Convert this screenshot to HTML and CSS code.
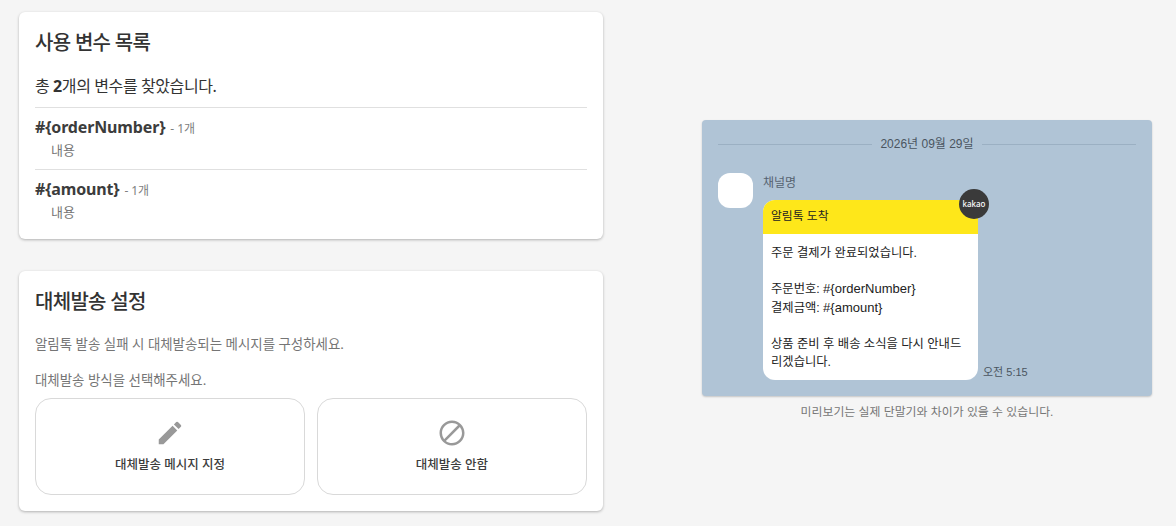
FILE: index.html
```html
<!DOCTYPE html>
<html lang="ko">
<head>
<meta charset="utf-8">
<title>알림톡 미리보기</title>
<link rel="stylesheet" href="styles.css">
</head>
<body>
<main class="page">
  <div class="left">
    <section class="card vars">
      <h2 class="title">사용 변수 목록</h2>
      <p class="count">총 <b>2</b>개의 변수를 찾았습니다.</p>
      <div class="var">
        <div class="var-head"><strong class="var-name">#{orderNumber}</strong><span class="var-count"> - 1개</span></div>
        <div class="var-use">내용</div>
      </div>
      <div class="var">
        <div class="var-head"><strong class="var-name">#{amount}</strong><span class="var-count"> - 1개</span></div>
        <div class="var-use">내용</div>
      </div>
    </section>
    <section class="card fallback">
      <h2 class="title">대체발송 설정</h2>
      <p class="desc first">알림톡 발송 실패 시 대체발송되는 메시지를 구성하세요.</p>
      <p class="desc second">대체발송 방식을 선택해주세요.</p>
      <div class="options">
        <button class="option">
          <svg class="icon" viewBox="0 0 24 24" width="30" height="30"><path d="M3 17.25V21h3.75L17.81 9.94l-3.75-3.75L3 17.25zM20.71 7.04a1 1 0 0 0 0-1.41l-2.34-2.34a1 1 0 0 0-1.41 0l-1.83 1.83 3.75 3.75 1.83-1.83z"/></svg>
          <span>대체발송 메시지 지정</span>
        </button>
        <button class="option">
          <svg class="icon" viewBox="0 0 24 24" width="30" height="30"><path d="M12 2C6.48 2 2 6.48 2 12s4.48 10 10 10 10-4.48 10-10S17.52 2 12 2zM4 12c0-4.42 3.58-8 8-8 1.85 0 3.55.63 4.9 1.69L5.69 16.9A7.902 7.902 0 0 1 4 12zm8 8c-1.85 0-3.55-.63-4.9-1.69L18.31 7.1A7.902 7.902 0 0 1 20 12c0 4.42-3.58 8-8 8z"/></svg>
          <span>대체발송 안함</span>
        </button>
      </div>
    </section>
  </div>
  <aside class="right">
    <div class="preview">
      <div class="date"><span>2026년 09월 29일</span></div>
      <div class="msg">
        <div class="avatar"></div>
        <div class="msg-body">
          <div class="channel">채널명</div>
          <div class="bubble-row">
            <div class="bubble">
              <div class="badge">kakao</div>
              <div class="bubble-head">알림톡 도착</div>
              <div class="bubble-text">주문 결제가 완료되었습니다.<br><br>주문번호: <span class="latin">#{orderNumber}</span><br>결제금액: <span class="latin">#{amount}</span><br><br>상품 준비 후 배송 소식을 다시 안내드리겠습니다.</div>
            </div>
            <div class="time">오전 5:15</div>
          </div>
        </div>
      </div>
    </div>
    <p class="note">미리보기는 실제 단말기와 차이가 있을 수 있습니다.</p>
  </aside>
</main>
</body>
</html>
```
FILE: styles.css
```css
* { box-sizing: border-box; }
html, body { margin: 0; height: 100%; }
body {
  background: #f5f5f5;
  color: #333;
  font-family: "Noto Sans", "Noto Sans CJK KR", sans-serif;
  overflow: hidden;
}
.page { display: flex; padding: 12px 24px 0 19px; opacity: .999; }
.left { width: 584px; display: flex; flex-direction: column; gap: 32px; flex: none; }
.right { margin-left: 99px; width: 450px; padding-top: 108px; flex: none; }
.card {
  background: #fff;
  border-radius: 6px;
  box-shadow: 0 1px 3px rgba(0,0,0,.28);
  padding: 17px 16px 16px;
}
.vars { height: 227px; }
.fallback { height: 240px; }
.title { margin: 0; font-size: 20px; line-height: 28px; font-weight: 500; color: #333; letter-spacing: -.7px; }
.count { margin: 15px 0 0; font-size: 16px; line-height: 28px; padding-bottom: 7px; color: #333; letter-spacing: -.4px; }
.count b { font-weight: 700; }
.var { border-top: 1px solid #e0e0e0; height: 62px; padding-top: 7px; }
.var-head { line-height: 24px; height: 24px; }
.var-name { font-size: 16px; font-weight: 700; color: #3c3c3c; letter-spacing: -.15px; }
.var-count { font-size: 12px; color: #808080; margin-left: 2px; letter-spacing: -.1px; }
.var-use { font-size: 13px; line-height: 20px; color: #757575; padding-left: 16px; margin-top: 1px; }
.desc { margin: 0; font-size: 13.45px; line-height: 20px; color: #757575; }
.desc.first { margin-top: 18px; }
.desc.second { margin-top: 16px; }
.options { display: grid; grid-template-columns: 270px 270px; gap: 12px; margin-top: 8px; }
.option {
  height: 97px;
  background: #fff;
  border: 1px solid #d9d9d9;
  border-radius: 16px;
  display: flex;
  flex-direction: column;
  align-items: center;
  padding: 19px 0 0;
  font: 500 12.5px/18px "Noto Sans", "Noto Sans CJK KR", sans-serif;
  color: #3c3c3c;
}
.option span { margin-top: 8px; }
.icon { fill: #999; display: block; }
.preview {
  background: #b0c4d6;
  border-radius: 4px;
  box-shadow: 0 1px 2px rgba(0,0,0,.2);
  height: 276px;
  padding: 16px;
  font-family: "Liberation Sans", "Noto Sans CJK KR", sans-serif;
}
.date {
  display: flex;
  align-items: center;
  gap: 8px;
  font-size: 12px;
  line-height: 16px;
  color: #4a5560;
}
.date::before, .date::after { content: ""; flex: 1; height: 1px; background: #9bb0c3; }
.msg { display: flex; margin-top: 21px; gap: 10px; }
.avatar { width: 35px; height: 35px; background: #fff; border-radius: 12px; flex: none; }
.msg-body { flex: 1; min-width: 0; }
.channel { font-size: 12px; line-height: 18px; color: #556270; padding-top: 1px; }
.bubble-row { display: flex; align-items: flex-end; gap: 5px; margin-top: 8px; }
.bubble { width: 215px; background: #fff; border-radius: 12px; position: relative; color: #222; }
.badge {
  position: absolute;
  top: -11px;
  right: -11px;
  width: 30px;
  height: 30px;
  border-radius: 50%;
  background: #3a3a3a;
  color: #fff;
  font: 500 8px/29px "Noto Sans", sans-serif;
  text-align: center;
}
.bubble-head {
  background: #fee71a;
  height: 34px;
  padding: 0 8px;
  font-size: 11.8px;
  line-height: 32px;
  border-radius: 12px 12px 0 0;
}
.bubble-text { height: 146px; padding: 10px 8px 0; font-size: 12.3px; line-height: 18.2px; word-break: break-all; }
.latin { font-size: 13px; line-height: 1; }
.time { font-size: 11px; line-height: 16px; color: #4a5560; }
.note { margin: 8px 0 0; text-align: center; font-size: 11.9px; line-height: 16px; color: #757575; font-family: "Liberation Sans", "Noto Sans CJK KR", sans-serif; }
```
